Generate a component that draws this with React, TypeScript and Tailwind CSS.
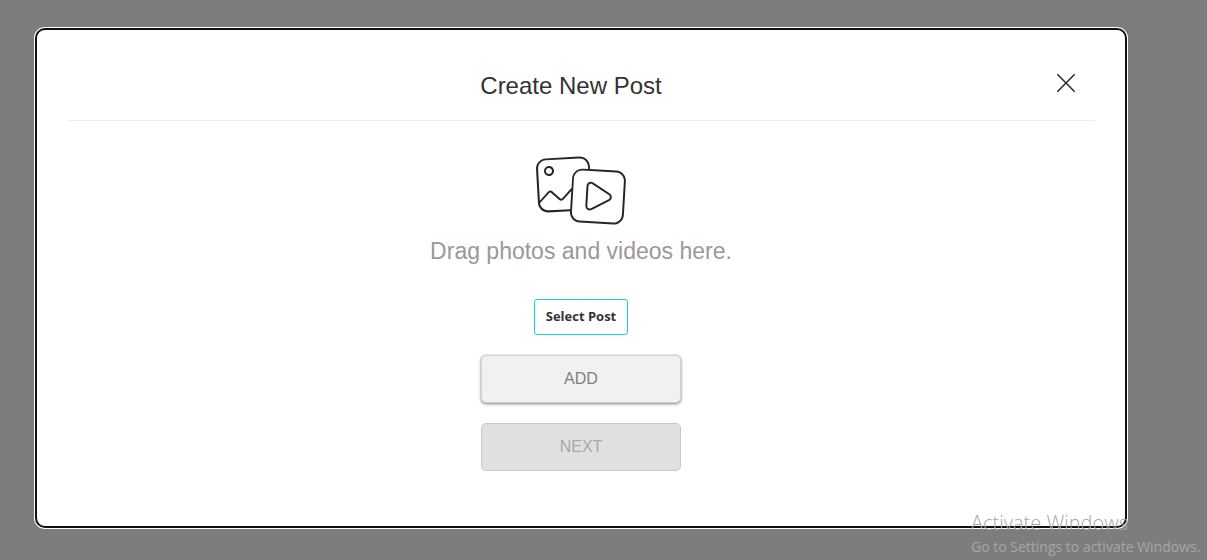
import React from "react";

function MediaIcon() {
  return (
    <svg
      className="h-[77px] w-24 text-[#262626]"
      viewBox="0 0 97.6 77.3"
      fill="currentColor"
      aria-hidden="true"
    >
      <path d="M16.3 24h.3c2.8-.2 4.9-2.6 4.8-5.4-.2-2.8-2.6-4.9-5.4-4.8s-4.9 2.6-4.8 5.4c.1 2.7 2.4 4.8 5.1 4.8zm-2.4-7.2c.5-.6 1.3-1 2.1-1h.2c1.7 0 3.1 1.4 3.1 3.1 0 1.7-1.4 3.1-3.1 3.1-1.7 0-3.1-1.4-3.1-3.1 0-.8.3-1.5.8-2.1z" />
      <path d="M84.7 18.4 58 16.9l-.2-3c-.3-5.7-5.2-10.1-11-9.8L12.9 6c-5.7.3-10.1 5.3-9.8 11L5 51v.8c.7 5.2 5.1 9.1 10.3 9.1h.6l21.7-1.2v.6c-.3 5.7 4 10.7 9.8 11l34 2h.6c5.5 0 10.1-4.3 10.4-9.8l2-34c.4-5.8-4-10.7-9.7-11.1zM7.2 10.8C8.7 9.1 10.8 8.1 13 8l34-1.9c4.6-.3 8.6 3.3 8.9 7.9l.2 2.8-5.3-.3c-5.7-.3-10.7 4-11 9.8l-.6 9.5-9.5 10.7c-.2.3-.6.4-1 .5-.4 0-.7-.1-1-.4l-7.8-7c-1.4-1.3-3.5-1.1-4.8.3L7 49 5.2 17c-.2-2.3.6-4.5 2-6.2zm8.7 48c-4.3.2-8.1-2.8-8.8-7.1l9.4-10.5c.2-.3.6-.4 1-.5.4 0 .7.1 1 .4l7.8 7c.7.6 1.6.9 2.5.9.9 0 1.7-.5 2.3-1.1l7.8-8.8-1.1 18.6-21.9 1.1zm76.5-29.5-2 34c-.3 4.6-4.3 8.2-8.9 7.9l-34-2c-4.6-.3-8.2-4.3-7.9-8.9l2-34c.3-4.4 3.9-7.9 8.4-7.9h.5l34 2c4.7.3 8.2 4.3 7.9 8.9z" />
      <path d="M78.2 41.6 61.3 30.5c-2.1-1.4-4.9-.8-6.2 1.3-.4.7-.7 1.4-.7 2.2l-1.2 20.1c-.1 2.5 1.7 4.6 4.2 4.8h.3c.7 0 1.4-.2 2-.5l18-9c2.2-1.1 3.1-3.8 2-6-.4-.7-.9-1.3-1.5-1.8zm-1.4 6-18 9c-.4.2-.8.3-1.3.3-.4 0-.9-.2-1.2-.4-.7-.5-1.2-1.3-1.1-2.2l1.2-20.1c.1-.9.6-1.7 1.4-2.1.8-.4 1.7-.3 2.5.1L77 43.3c1.2.8 1.5 2.3.7 3.4-.2.4-.5.7-.9.9z" />
    </svg>
  );
}

export default function App() {
  return (
    <div className="relative min-h-screen bg-[#7d7d7d] pt-7 pr-20 pb-8 pl-[35px] font-['Liberation_Sans',Arial,sans-serif]">
      <div
        role="dialog"
        aria-labelledby="dialog-title"
        className="rounded-[10px] border-2 border-[#101010] bg-white px-[30px] pt-10 pb-[55px] ring-1 ring-white"
      >
        <header className="flex items-start border-b border-[#ededed] pr-[19px] pb-[18px] pl-[19px]">
          <h1 id="dialog-title" className="flex-1 text-center text-2xl text-[#333333]">
            Create New Post
          </h1>
          <button type="button" aria-label="Close" className="mt-[3px] size-5 text-[#212121]">
            <svg viewBox="0 0 20 20" className="size-5" fill="none" stroke="currentColor" strokeWidth="1.4">
              <path d="M1.3 1.3 18.7 18.7M18.7 1.3 1.3 18.7" />
            </svg>
          </button>
        </header>

        <div className="flex flex-col items-center pt-[31px]">
          <MediaIcon />
          <p className="mt-1.5 text-[23px] leading-8 text-[#999999]">Drag photos and videos here.</p>
          <button
            type="button"
            className="mt-8 h-9 rounded-[3px] border border-[#14d6d0] px-[11px] font-['Open_Sans','Noto_Sans',sans-serif] text-[13px] font-bold text-[#333333]"
          >
            Select Post
          </button>
          <button
            type="button"
            className="mt-5 h-12 w-[200px] rounded-[5px] border border-[#d0d0d0] bg-[#f1f1f1] text-base text-[#808080] shadow-[0_1px_3px_rgba(0,0,0,0.5)]"
          >
            ADD
          </button>
          <button
            type="button"
            disabled
            className="mt-5 h-12 w-[200px] rounded-[5px] border border-[#c8c8c8] bg-[#e0e0e0] text-base text-[#a8a8a8]"
          >
            NEXT
          </button>
        </div>
      </div>

      <div className="pointer-events-none absolute right-0 bottom-px w-[236px] font-['Open_Sans','Noto_Sans',sans-serif] whitespace-nowrap text-[#a6a6a6]">
        <p className="text-xl leading-6 font-light">Activate Windows</p>
        <p className="text-sm leading-6">Go to Settings to activate Windows.</p>
      </div>
    </div>
  );
}
